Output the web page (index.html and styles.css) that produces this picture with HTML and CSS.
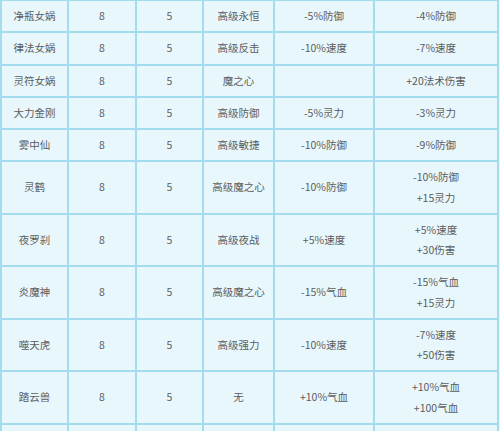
FILE: index.html
```html
<!DOCTYPE html>
<html lang="zh-CN">
<head>
<meta charset="utf-8">
<title>召唤兽表</title>
<link rel="stylesheet" href="styles.css">
</head>
<body>
<table class="pets">
  <colgroup>
    <col class="c1"><col class="c2"><col class="c3"><col class="c4"><col class="c5"><col class="c6">
  </colgroup>
  <tbody>
    <tr><td>净瓶女娲</td><td>8</td><td>5</td><td>高级永恒</td><td>-5%防御</td><td>-4%防御</td></tr>
    <tr><td>律法女娲</td><td>8</td><td>5</td><td>高级反击</td><td>-10%速度</td><td>-7%速度</td></tr>
    <tr><td>灵符女娲</td><td>8</td><td>5</td><td>魔之心</td><td></td><td>+20法术伤害</td></tr>
    <tr><td>大力金刚</td><td>8</td><td>5</td><td>高级防御</td><td>-5%灵力</td><td>-3%灵力</td></tr>
    <tr><td>雾中仙</td><td>8</td><td>5</td><td>高级敏捷</td><td>-10%防御</td><td>-9%防御</td></tr>
    <tr><td>灵鹤</td><td>8</td><td>5</td><td>高级魔之心</td><td>-10%防御</td><td>-10%防御<br>+15灵力</td></tr>
    <tr><td>夜罗刹</td><td>8</td><td>5</td><td>高级夜战</td><td>+5%速度</td><td>+5%速度<br>+30伤害</td></tr>
    <tr><td>炎魔神</td><td>8</td><td>5</td><td>高级魔之心</td><td>-15%气血</td><td>-15%气血<br>+15灵力</td></tr>
    <tr><td>噬天虎</td><td>8</td><td>5</td><td>高级强力</td><td>-10%速度</td><td>-7%速度<br>+50伤害</td></tr>
    <tr><td>踏云兽</td><td>8</td><td>5</td><td>无</td><td>+10%气血</td><td>+10%气血<br>+100气血</td></tr>
    <tr class="tail"><td></td><td></td><td></td><td></td><td></td><td></td></tr>
  </tbody>
</table>
</body>
</html>
```

FILE: styles.css
```css
html, body {
  margin: 0;
  padding: 0;
  background: #e8f7fc;
  overflow: hidden;
}

.pets {
  margin-top: -1px;
  width: 499px;
  table-layout: fixed;
  border-collapse: separate;
  border-spacing: 0;
  border: 1px solid #a3dcee;
  background: #e8f7fc;
  font-family: "Noto Sans CJK SC", "Microsoft YaHei", sans-serif;
  font-size: 10.5px;
  line-height: 20.25px;
  color: #5c5c5c;
}

.c1 { width: 67px; }
.c2 { width: 68px; }
.c3 { width: 67px; }
.c4 { width: 71px; }
.c5 { width: 100px; }
.c6 { width: 124px; }

.pets td {
  box-sizing: border-box;
  border: 1px solid #a3dcee;
  padding: 5px 2px;
  text-align: center;
  vertical-align: middle;
  white-space: nowrap;
}

.pets .tail td {
  height: 32px;
}
```
